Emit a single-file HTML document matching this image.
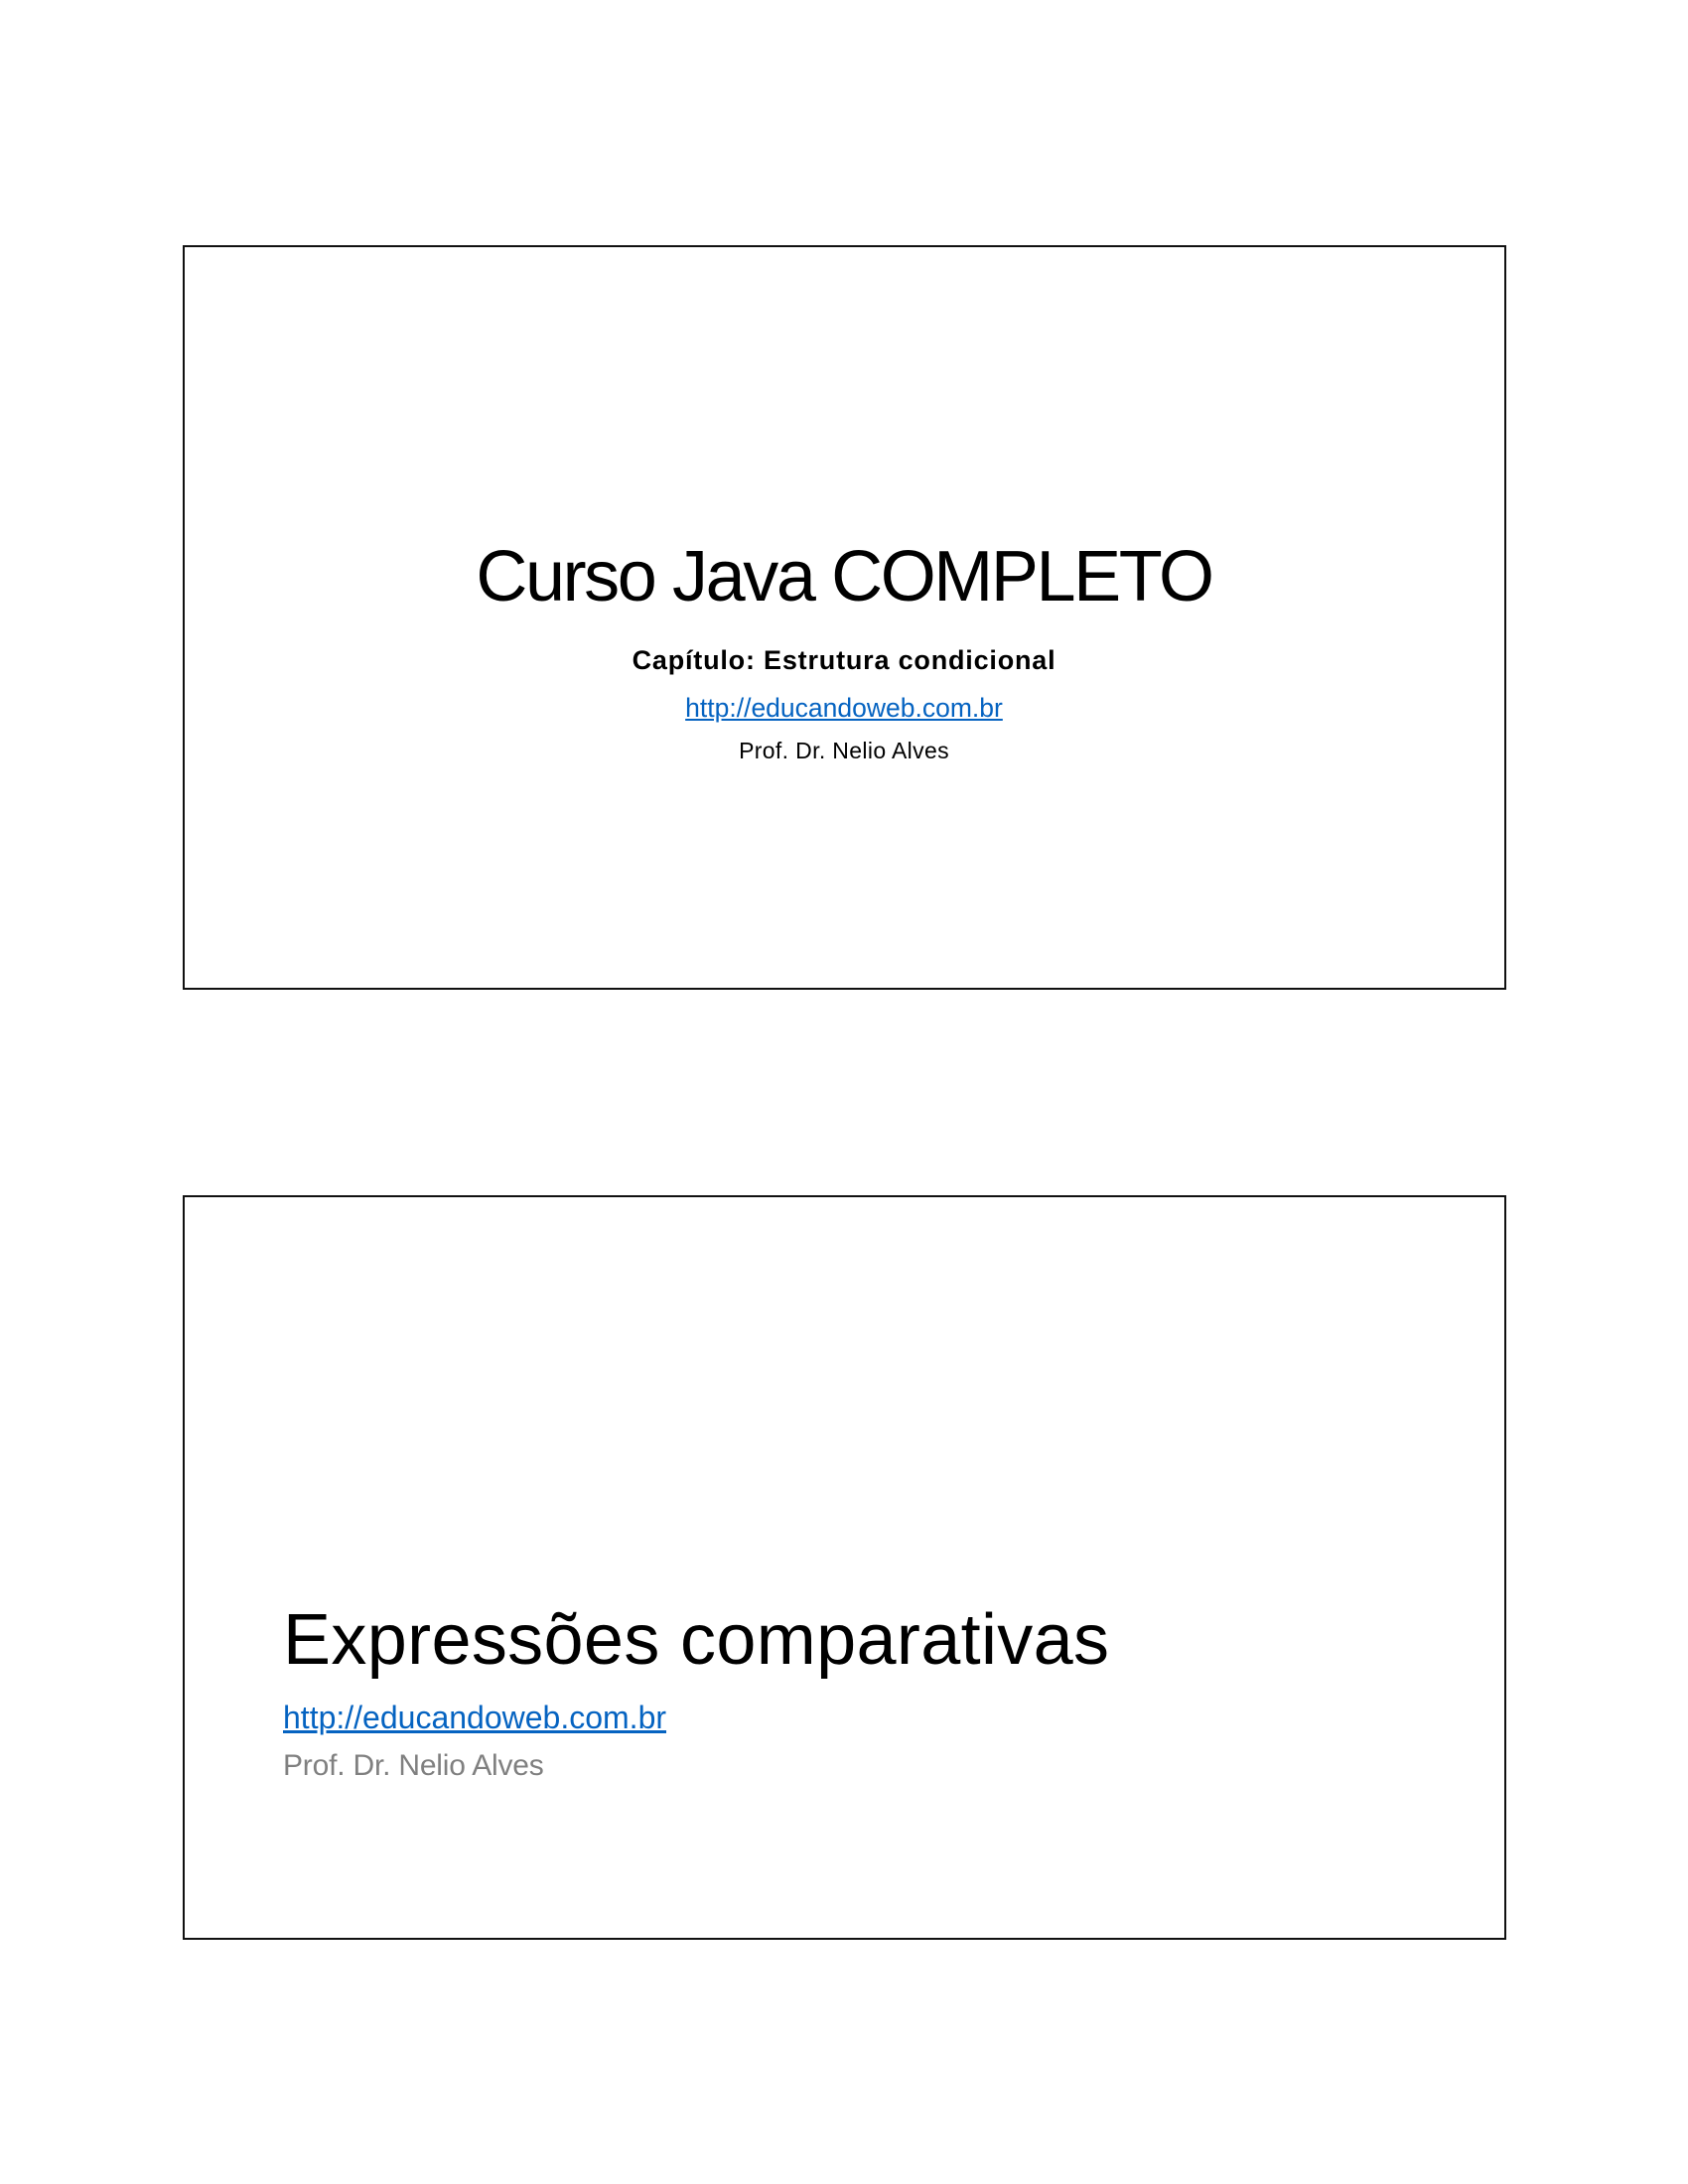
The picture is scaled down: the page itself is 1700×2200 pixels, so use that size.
<!DOCTYPE html>
<html><head><meta charset="utf-8"><style>
html,body{margin:0;padding:0;background:#fff;}
body{width:1700px;height:2200px;position:relative;overflow:hidden;font-family:"Liberation Sans",sans-serif;}
.box{position:absolute;border:2.5px solid #111;box-sizing:border-box;}
.t{position:absolute;line-height:1;white-space:nowrap;}
.c{left:184px;width:1332px;text-align:center;}
a{color:#0563c1;text-decoration:underline;}
</style></head><body>
<div class="box" style="left:184px;top:247px;width:1333px;height:750px;"></div>
<div class="t c" style="top:545px;font-size:72px;letter-spacing:-2.4px;color:#000;">Curso Java COMPLETO</div>
<div class="t c" style="top:652px;font-size:27px;font-weight:bold;letter-spacing:0.8px;color:#000;">Capítulo: Estrutura condicional</div>
<div class="t c" style="top:700px;font-size:26.5px;color:#0563c1;"><a>http://educandoweb.com.br</a></div>
<div class="t c" style="top:745px;font-size:23px;letter-spacing:0.35px;color:#000;">Prof. Dr. Nelio Alves</div>

<div class="box" style="left:184px;top:1204px;width:1333px;height:750px;"></div>
<div class="t" style="left:285px;top:1616px;font-size:72px;letter-spacing:0.35px;color:#000;">Expressões comparativas</div>
<div class="t" style="left:285px;top:1714px;font-size:32px;letter-spacing:0px;"><a>http://educandoweb.com.br</a></div>
<div class="t" style="left:285px;top:1764px;font-size:30px;letter-spacing:-0.2px;color:#808080;">Prof. Dr. Nelio Alves</div>
</body></html>
